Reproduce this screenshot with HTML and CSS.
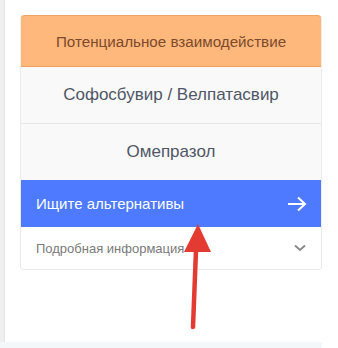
FILE: index.html
```html
<!DOCTYPE html>
<html lang="ru">
<head>
<meta charset="utf-8">
<link rel="stylesheet" href="styles.css">
</head>
<body>
<div class="page">
  <div class="gutter"></div>
  <div class="main">
    <div class="card">
      <div class="head">Потенциальное взаимодействие</div>
      <div class="drug">Софосбувир / Велпатасвир</div>
      <div class="drug">Омепразол</div>
      <div class="alt">
        <span>Ищите альтернативы</span>
        <svg class="arrow" width="20" height="16" viewBox="0 0 20 16"><path d="M1 8H18M11 1.5L18 8L11 14.5" fill="none" stroke="#fff" stroke-width="2"/></svg>
      </div>
      <div class="more">
        <span>Подробная информация</span>
        <svg class="chev" width="12" height="8" viewBox="0 0 12 8"><path d="M1 1.5L6 6L11 1.5" fill="none" stroke="#8a8a8a" stroke-width="2"/></svg>
      </div>
    </div>
  </div>
</div>
<div class="strip"></div>
<svg class="pointer" width="338" height="348" viewBox="0 0 338 348"><path d="M193 327L196 250" stroke="#e33a32" stroke-width="4.5" stroke-linecap="round"/><path d="M198 224L211 252L184 252Z" fill="#e33a32"/></svg>
</body>
</html>
```
FILE: styles.css
```css
html, body { margin: 0; padding: 0; background: #fff; }
body { width: 338px; height: 348px; position: relative; overflow: hidden; font-family: "Liberation Sans", Arial, sans-serif; }
.page { display: flex; height: 342px; }
.gutter { width: 4px; background: #efefef; border-right: 1px solid #e4e4e4; }
.main { flex: 1; padding: 15px 0 0 15px; }
.card { width: 302px; border-radius: 4px; border: 1px solid #ebebeb; border-top: none; box-sizing: border-box; overflow: hidden; }
.head { height: 52px; background: #ffb87b; border: 1px solid #f0a061; border-radius: 4px 4px 0 0; margin: 0 -1px; display: flex; align-items: center; justify-content: center; color: #7b4a2c; font-size: 15.2px; box-sizing: border-box; }
.drug { height: 57px; background: #f9f9f9; border-bottom: 1px solid #e6e6e6; display: flex; align-items: center; justify-content: center; color: #4f5665; font-size: 17px; box-sizing: border-box; }
.drug + .drug { height: 56px; border-bottom: none; }
.alt { height: 47px; background: #4d7aff; margin: 0 -1px; padding: 0 15px 0 16px; display: flex; align-items: center; justify-content: space-between; color: #fff; font-size: 15px; }
.more { height: 42px; padding: 0 15px 0 15px; display: flex; align-items: center; justify-content: space-between; color: #7a7a7a; font-size: 13px; }
.strip { height: 6px; width: 322px; background: #f4f7fa; }
.pointer { position: absolute; left: 0; top: 0; }
```
